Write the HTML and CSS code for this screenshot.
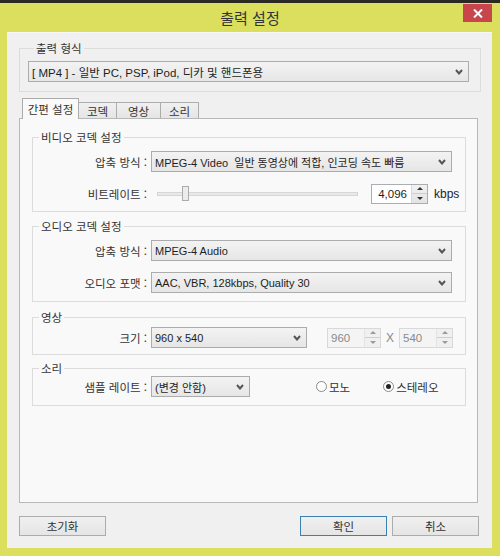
FILE: index.html
```html
<!DOCTYPE html>
<html lang="ko">
<head>
    <meta charset="UTF-8">
    <title>출력 설정</title>
    <link rel="stylesheet" href="styles.css">
</head>
<body>
<div class="window">
    <div class="topstrip"></div>
    <div class="titlebar">
        <span class="title">출력 설정</span>
        <span class="close">
            <svg width="10" height="9" viewBox="0 0 10 9"><path d="M1 0.5 L9 8.5 M9 0.5 L1 8.5" stroke="#fff" stroke-width="2"/></svg>
        </span>
    </div>
    <div class="client">
        <fieldset class="group g-format">
            <legend>출력 형식</legend>
            <div class="combo combo-format">
                <span class="text">[ MP4 ] - 일반 PC, PSP, iPod, 디카 및 핸드폰용</span>
                <span class="arrow"><svg width="8" height="6" viewBox="0 0 8 6"><path d="M1 1 L4 4.5 L7 1" fill="none" stroke="#555" stroke-width="2"/></svg></span>
            </div>
        </fieldset>

        <div class="tabs">
            <span class="tab active">간편 설정</span>
            <span class="tab t-codec">코덱</span>
            <span class="tab t-video">영상</span>
            <span class="tab t-sound">소리</span>
        </div>

        <div class="panel">
            <fieldset class="group g-video">
                <legend>비디오 코덱 설정</legend>
                <div class="row">
                    <span class="lbl">압축 방식 :</span>
                    <div class="combo combo-full">
                        <span class="text">MPEG-4 Video&nbsp; 일반 동영상에 적합, 인코딩 속도 빠름</span>
                        <span class="arrow"><svg width="8" height="6" viewBox="0 0 8 6"><path d="M1 1 L4 4.5 L7 1" fill="none" stroke="#555" stroke-width="2"/></svg></span>
                    </div>
                </div>
                <div class="row row-gap">
                    <span class="lbl">비트레이트 :</span>
                    <div class="slider">
                        <div class="track"></div>
                        <div class="thumb"></div>
                    </div>
                    <div class="spin spin-bitrate">
                        <span class="value">4,096</span>
                        <span class="spin-btns">
                            <span class="up"></span>
                            <span class="down"></span>
                        </span>
                    </div>
                    <span class="unit">kbps</span>
                </div>
            </fieldset>

            <fieldset class="group g-audio">
                <legend>오디오 코덱 설정</legend>
                <div class="row">
                    <span class="lbl">압축 방식 :</span>
                    <div class="combo combo-full">
                        <span class="text">MPEG-4 Audio</span>
                        <span class="arrow"><svg width="8" height="6" viewBox="0 0 8 6"><path d="M1 1 L4 4.5 L7 1" fill="none" stroke="#555" stroke-width="2"/></svg></span>
                    </div>
                </div>
                <div class="row row-gap">
                    <span class="lbl">오디오 포맷 :</span>
                    <div class="combo combo-full">
                        <span class="text">AAC, VBR, 128kbps, Quality 30</span>
                        <span class="arrow"><svg width="8" height="6" viewBox="0 0 8 6"><path d="M1 1 L4 4.5 L7 1" fill="none" stroke="#555" stroke-width="2"/></svg></span>
                    </div>
                </div>
            </fieldset>

            <fieldset class="group g-size">
                <legend>영상</legend>
                <div class="row">
                    <span class="lbl">크기 :</span>
                    <div class="combo combo-size">
                        <span class="text">960 x 540</span>
                        <span class="arrow"><svg width="8" height="6" viewBox="0 0 8 6"><path d="M1 1 L4 4.5 L7 1" fill="none" stroke="#555" stroke-width="2"/></svg></span>
                    </div>
                    <div class="spin spin-dim disabled">
                        <span class="value">960</span>
                        <span class="spin-btns">
                            <span class="up"></span>
                            <span class="down"></span>
                        </span>
                    </div>
                    <span class="times">X</span>
                    <div class="spin spin-dim disabled">
                        <span class="value">540</span>
                        <span class="spin-btns">
                            <span class="up"></span>
                            <span class="down"></span>
                        </span>
                    </div>
                </div>
            </fieldset>

            <fieldset class="group g-sound">
                <legend>소리</legend>
                <div class="row">
                    <span class="lbl">샘플 레이트 :</span>
                    <div class="combo combo-rate">
                        <span class="text">(변경 안함)</span>
                        <span class="arrow"><svg width="8" height="6" viewBox="0 0 8 6"><path d="M1 1 L4 4.5 L7 1" fill="none" stroke="#555" stroke-width="2"/></svg></span>
                    </div>
                    <label class="radio r-mono"><span class="dot"></span>모노</label>
                    <label class="radio r-stereo"><span class="dot checked"></span>스테레오</label>
                </div>
            </fieldset>
        </div>

        <div class="buttons">
            <span class="btn">초기화</span>
            <span class="spacer"></span>
            <span class="btn default">확인</span>
            <span class="btn">취소</span>
        </div>
    </div>
</div>
</body>
</html>
```

FILE: styles.css
```css
body { margin: 0; background: #dadd5c; font-family: "Liberation Sans", "Noto Sans CJK KR", sans-serif; font-size: 12px; color: #1e1e1e; }
.window { width: 500px; height: 556px; background: #dcdf5e; overflow: hidden; }
.topstrip { height: 3px; background: #2a2a22; }
.titlebar { position: relative; height: 29px; display: flex; align-items: center; justify-content: center; }
.title { font-family: "Noto Sans CJK KR", sans-serif; font-size: 15px; color: #333; }
.close { position: absolute; top: 1px; left: 463px; width: 29px; height: 18px; background: #c8454b; display: flex; align-items: center; justify-content: center; }

.client { margin-left: 7px; width: 485px; height: 516px; box-sizing: border-box; background: #f0f0f0; border-top: 1px solid #f7f7f7; padding: 8px 0 0 12px; }

.group { margin: 0; border: 1px solid #dcdcdc; padding: 0 13px 0 0; min-width: 0; }
.group legend { margin-left: 6px; padding: 0 2px; line-height: 14px; font-family: "Noto Sans CJK KR", sans-serif; font-size: 11.5px; color: #333; }

.g-format { width: 462px; box-sizing: border-box; padding: 6px 11px 9px 8px; }
.combo { display: flex; align-items: center; height: 21px; box-sizing: border-box; border: 1px solid #acacac; background: linear-gradient(#f3f3f3, #e6e6e6); padding-left: 3px; color: #1e1e1e; }
.combo .text { flex: 1; white-space: nowrap; overflow: hidden; font-family: "Liberation Sans", "Noto Sans CJK KR", sans-serif; font-size: 11px; }
.combo .arrow { width: 18px; display: flex; justify-content: center; }
.combo-format .text { font-size: 11.5px; }

.tabs { display: flex; align-items: flex-end; height: 20px; margin-top: 6px; padding-left: 3px; position: relative; z-index: 1; }
.tab { height: 16px; box-sizing: border-box; border: 1px solid #acacac; border-bottom: none; background: linear-gradient(#f0f0f0, #e5e5e5); display: flex; align-items: center; justify-content: center; font-family: "Noto Sans CJK KR", sans-serif; font-size: 11.5px; color: #333; margin-left: -1px; }
.tab.active { height: 21px; width: 57px; background: #f9f9f9; margin-left: 0; margin-bottom: -1px; }
.t-codec { width: 39px; }
.t-video { width: 45px; }
.t-sound { width: 39px; }

.panel { width: 459px; height: 385px; box-sizing: border-box; border: 1px solid #b8b8b8; background: #f9f9f9; padding: 11px 11px 0 12px; }
.panel .group { width: 434px; box-sizing: border-box; }
.g-video { padding-top: 7px; padding-bottom: 7px; }
.g-audio { margin-top: 7px; padding-top: 7px; padding-bottom: 8px; }
.g-size { margin-top: 8px; padding-top: 3px; padding-bottom: 6px; }
.g-sound { margin-top: 6px; padding-top: 1px; padding-bottom: 8px; }

.row { display: flex; align-items: center; height: 21px; }
.row > * { flex-shrink: 0; }
.row-gap { margin-top: 11px; }
.lbl { width: 114px; text-align: right; padding-right: 4px; box-sizing: content-box; white-space: nowrap; font-family: "Noto Sans CJK KR", sans-serif; font-size: 11.5px; color: #333; }
.combo-full { width: 301px; }
.combo-size { width: 156px; }
.combo-rate { width: 99px; }

.slider { position: relative; width: 201px; height: 15px; margin-left: 6px; }
.track { position: absolute; left: 0; right: 0; top: 6px; height: 2px; border: 1px solid #d6d6d6; background: #e7eaea; }
.thumb { position: absolute; left: 25px; top: 0; width: 5px; height: 13px; border: 1px solid #acacac; background: #ececec; }

.spin { display: flex; height: 20px; box-sizing: border-box; border: 1px solid #abadb3; background: #fff; font-size: 11.5px; }
.spin .value { flex: 1; text-align: right; padding-right: 4px; line-height: 18px; }
.spin-btns { width: 15px; display: flex; flex-direction: column; border-left: 1px solid #d9d9d9; background: linear-gradient(#f2f2f2, #e3e3e3); }
.spin-btns span { flex: 1; display: flex; align-items: center; justify-content: center; }
.spin-btns .up { border-bottom: 1px solid #cfcfcf; }
.spin-btns .up::after { content: ""; border-left: 3px solid transparent; border-right: 3px solid transparent; border-bottom: 3px solid #333; }
.spin-btns .down::after { content: ""; border-left: 3px solid transparent; border-right: 3px solid transparent; border-top: 3px solid #333; }
.spin-bitrate { width: 57px; margin-left: 13px; }
.unit { margin-left: 6px; }

.spin.disabled { border-color: #d9d9d9; background: #f4f4f4; color: #8a8a8a; }
.spin.disabled .value { text-align: left; padding-left: 3px; }
.spin.disabled .spin-btns { border-left-color: #e3e3e3; background: #f0f0f0; }
.spin.disabled .spin-btns span::after { border-top-color: #9a9a9a; border-bottom-color: #9a9a9a; }
.spin-dim { width: 54px; }
.g-size .combo + .spin { margin-left: 20px; }
.times { width: 18px; text-align: center; color: #8a8a8a; font-family: "Liberation Sans", sans-serif; }

.radio { display: flex; align-items: center; font-family: "Noto Sans CJK KR", sans-serif; font-size: 11.5px; color: #333; }
.radio .dot { width: 11px; height: 11px; box-sizing: border-box; border: 1px solid #8a8a8a; border-radius: 50%; background: #fff; margin-right: 2px; display: flex; align-items: center; justify-content: center; }
.radio .dot.checked::after { content: ""; width: 5px; height: 5px; border-radius: 50%; background: #222; }
.r-mono { margin-left: 66px; }
.r-stereo { margin-left: 33px; }

.buttons { display: flex; width: 460px; margin-top: 13px; }
.spacer { flex: 1; }
.btn { width: 87px; height: 20px; box-sizing: border-box; border: 1px solid #acacac; background: linear-gradient(#f0f0f0, #e5e5e5); display: flex; align-items: center; justify-content: center; font-family: "Noto Sans CJK KR", sans-serif; font-size: 11.5px; color: #333; }
.btn.default { border-color: #3c7fb1; margin-right: 5px; }
```
